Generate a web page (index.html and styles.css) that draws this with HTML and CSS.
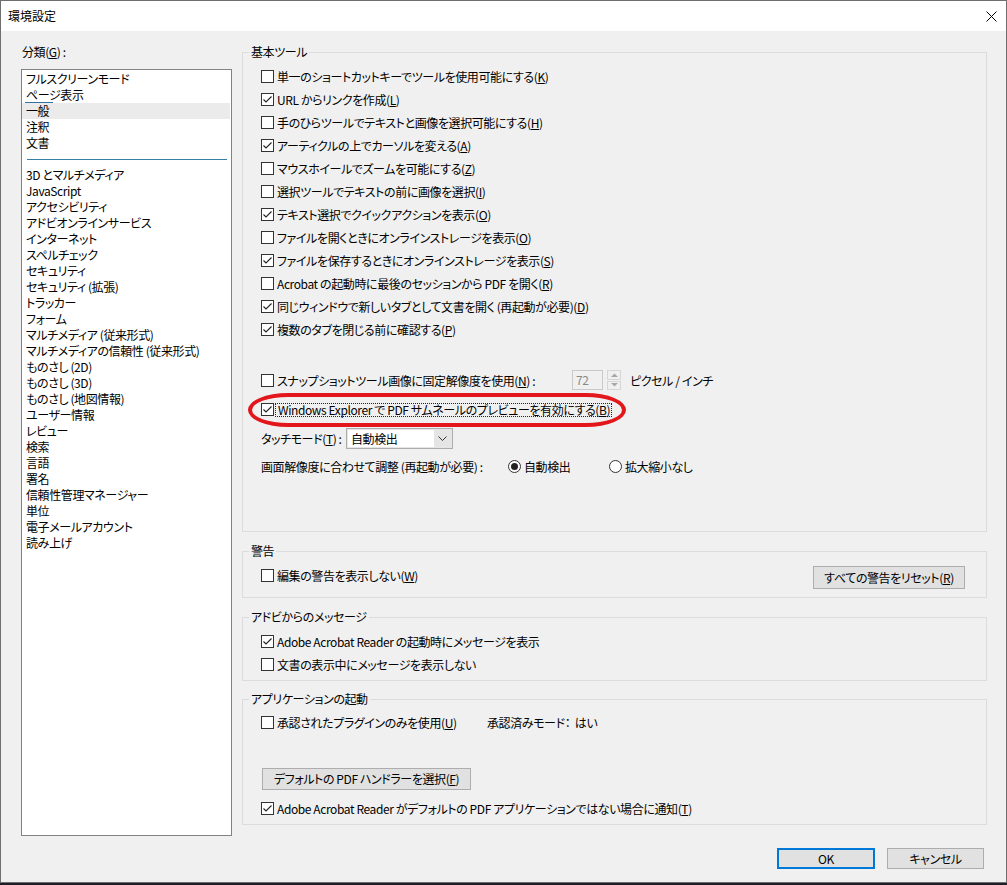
FILE: index.html
```html
<!DOCTYPE html>
<html lang="ja">

<head>
    <meta charset="UTF-8">
    <meta name="viewport" content="width=device-width, initial-scale=1.0">
    <title>環境設定</title>
    <link rel="stylesheet" href="styles.css">
</head>

<body>
    <div class="window">
        <div class="titlebar">
            <span class="title">環境設定</span>
            <svg class="close" width="11" height="11" viewBox="0 0 11 11">
                <path d="M0.5 0.5L10.5 10.5M10.5 0.5L0.5 10.5" stroke="#000" stroke-width="1" fill="none" />
            </svg>
        </div>

        <div class="dialog">
            <!-- left: categories -->
            <div class="side">
                <div class="side-label">分類(<u>G</u>) :</div>
                <ul class="category-list">
                    <li>フルスクリーンモード</li>
                    <li class="hover">ページ表示</li>
                    <li class="selected">一般</li>
                    <li>注釈</li>
                    <li>文書</li>
                    <li class="sep"></li>
                    <li>3D とマルチメディア</li>
                    <li>JavaScript</li>
                    <li>アクセシビリティ</li>
                    <li>アドビオンラインサービス</li>
                    <li>インターネット</li>
                    <li>スペルチェック</li>
                    <li>セキュリティ</li>
                    <li>セキュリティ (拡張)</li>
                    <li>トラッカー</li>
                    <li>フォーム</li>
                    <li>マルチメディア (従来形式)</li>
                    <li>マルチメディアの信頼性 (従来形式)</li>
                    <li>ものさし (2D)</li>
                    <li>ものさし (3D)</li>
                    <li>ものさし (地図情報)</li>
                    <li>ユーザー情報</li>
                    <li>レビュー</li>
                    <li>検索</li>
                    <li>言語</li>
                    <li>署名</li>
                    <li>信頼性管理マネージャー</li>
                    <li>単位</li>
                    <li>電子メールアカウント</li>
                    <li>読み上げ</li>
                </ul>
            </div>

            <!-- right: settings -->
            <div class="main">
                <fieldset class="group group-tools">
                    <legend>基本ツール</legend>
                    <div class="row"><span class="box"></span><span>単一のショートカットキーでツールを使用可能にする(<u>K</u>)</span></div>
                    <div class="row"><span class="box"><svg viewBox="0 0 11 11"><path d="M1.5 5.5L4 8L9.5 2.5" /></svg></span><span>URL からリンクを作成(<u>L</u>)</span></div>
                    <div class="row"><span class="box"></span><span>手のひらツールでテキストと画像を選択可能にする(<u>H</u>)</span></div>
                    <div class="row"><span class="box"><svg viewBox="0 0 11 11"><path d="M1.5 5.5L4 8L9.5 2.5" /></svg></span><span>アーティクルの上でカーソルを変える(<u>A</u>)</span></div>
                    <div class="row"><span class="box"></span><span>マウスホイールでズームを可能にする(<u>Z</u>)</span></div>
                    <div class="row"><span class="box"></span><span>選択ツールでテキストの前に画像を選択(<u>I</u>)</span></div>
                    <div class="row"><span class="box"><svg viewBox="0 0 11 11"><path d="M1.5 5.5L4 8L9.5 2.5" /></svg></span><span>テキスト選択でクイックアクションを表示(<u>O</u>)</span></div>
                    <div class="row"><span class="box"></span><span>ファイルを開くときにオンラインストレージを表示(<u>O</u>)</span></div>
                    <div class="row"><span class="box"><svg viewBox="0 0 11 11"><path d="M1.5 5.5L4 8L9.5 2.5" /></svg></span><span>ファイルを保存するときにオンラインストレージを表示(<u>S</u>)</span></div>
                    <div class="row"><span class="box"></span><span>Acrobat の起動時に最後のセッションから PDF を開く(<u>R</u>)</span></div>
                    <div class="row"><span class="box"><svg viewBox="0 0 11 11"><path d="M1.5 5.5L4 8L9.5 2.5" /></svg></span><span>同じウィンドウで新しいタブとして文書を開く (再起動が必要)(<u>D</u>)</span></div>
                    <div class="row"><span class="box"><svg viewBox="0 0 11 11"><path d="M1.5 5.5L4 8L9.5 2.5" /></svg></span><span>複数のタブを閉じる前に確認する(<u>P</u>)</span></div>

                    <div class="row row-snapshot">
                        <span class="box"></span>
                        <span class="snap-label">スナップショットツール画像に固定解像度を使用(<u>N</u>) :</span>
                        <span class="num-input">72</span>
                        <span class="spinner">
                            <span class="spin"><svg width="7" height="4" viewBox="0 0 7 4"><path d="M0 4L3.5 0.5L7 4Z" /></svg></span>
                            <span class="spin"><svg width="7" height="4" viewBox="0 0 7 4"><path d="M0 0L3.5 3.5L7 0Z" /></svg></span>
                        </span>
                        <span class="unit">ピクセル / インチ</span>
                    </div>

                    <div class="row row-explorer">
                        <span class="box"><svg viewBox="0 0 11 11"><path d="M1.5 5.5L4 8L9.5 2.5" /></svg></span>
                        <span class="focus">Windows Explorer で PDF サムネールのプレビューを有効にする(<u>B</u>)</span>
                        <span class="annotation"></span>
                    </div>

                    <div class="row row-touch">
                        <span class="touch-label">タッチモード(<u>T</u>) :</span>
                        <span class="select">
                            <span class="select-value">自動検出</span>
                            <span class="select-arrow">
                                <svg width="9" height="5" viewBox="0 0 9 5"><path d="M0.5 0.5L4.5 4.5L8.5 0.5" fill="none" stroke="#333" stroke-width="1" /></svg>
                            </span>
                        </span>
                    </div>

                    <div class="row row-scale">
                        <span class="scale-label">画面解像度に合わせて調整 (再起動が必要) :</span>
                        <span class="radio-option first"><span class="radio checked"></span>自動検出</span>
                        <span class="radio-option"><span class="radio"></span>拡大縮小なし</span>
                    </div>
                </fieldset>

                <fieldset class="group group-warn">
                    <legend>警告</legend>
                    <div class="warn-row">
                        <div class="row"><span class="box"></span><span>編集の警告を表示しない(<u>W</u>)</span></div>
                        <button class="btn btn-reset">すべての警告をリセット(<u>R</u>)</button>
                    </div>
                </fieldset>

                <fieldset class="group group-msg">
                    <legend>アドビからのメッセージ</legend>
                    <div class="row"><span class="box"><svg viewBox="0 0 11 11"><path d="M1.5 5.5L4 8L9.5 2.5" /></svg></span><span>Adobe Acrobat Reader の起動時にメッセージを表示</span></div>
                    <div class="row"><span class="box"></span><span>文書の表示中にメッセージを表示しない</span></div>
                </fieldset>

                <fieldset class="group group-app">
                    <legend>アプリケーションの起動</legend>
                    <div class="row">
                        <span class="box"></span>
                        <span class="plugin-label">承認されたプラグインのみを使用(<u>U</u>)</span>
                        <span>承認済みモード：&nbsp; はい</span>
                    </div>
                    <button class="btn btn-handler">デフォルトの PDF ハンドラーを選択(<u>F</u>)</button>
                    <div class="row row-notify"><span class="box"><svg viewBox="0 0 11 11"><path d="M1.5 5.5L4 8L9.5 2.5" /></svg></span><span>Adobe Acrobat Reader がデフォルトの PDF アプリケーションではない場合に通知(<u>T</u>)</span></div>
                </fieldset>

                <div class="footer">
                    <button class="btn btn-ok">OK</button>
                    <button class="btn btn-cancel">キャンセル</button>
                </div>
            </div>
        </div>
    </div>
</body>

</html>
```

FILE: styles.css
```css
* {
    margin: 0;
    padding: 0;
    box-sizing: border-box;
}

body {
    background: #1f1d26;
    font-family: "Noto Sans CJK JP", "Noto Sans", sans-serif;
    font-size: 12px;
    letter-spacing: -0.4px;
    color: #000;
    font-feature-settings: "palt";
}

u {
    text-decoration: underline;
    text-underline-offset: 1px;
}

.window {
    width: 1007px;
    height: 883px;
    background: #f0f0f0;
    border: 1px solid #6e6e6e;
    display: flex;
    flex-direction: column;
}

.titlebar {
    height: 30px;
    background: #fff;
    display: flex;
    align-items: center;
    justify-content: space-between;
    padding: 0 9px 0 7px;
}

.title {
    font-size: 12px;
    line-height: 16px;
    letter-spacing: 0;
}

.close {
    display: block;
}

.dialog {
    flex: 1;
    display: flex;
    gap: 10px;
    padding: 13px 19px 0 20px;
}

/* category list */

.side {
    width: 211px;
}

.side-label {
    line-height: 16px;
    padding-left: 1px;
}

.category-list {
    list-style: none;
    margin-top: 9px;
    height: 767px;
    background: #fff;
    border: 1px solid #828282;
    padding-top: 1px;
}

.category-list li {
    line-height: 16px;
    height: 16px;
    padding-left: 4px;
    white-space: nowrap;
    position: relative;
}

.category-list li.selected {
    background: #ebebeb;
    margin-right: 1px;
}

.category-list li.hover::after {
    content: '';
    position: absolute;
    left: 3px;
    bottom: -1px;
    width: 28px;
    height: 2px;
    background: #2f72a3;
}

.category-list li.sep {
    display: flex;
    align-items: center;
    padding: 0 4px 0 5px;
}

.category-list li.sep::before {
    content: '';
    flex: 1;
    height: 1px;
    background: #3a7fa8;
}

/* groups */

.main {
    width: 745px;
    display: flex;
    flex-direction: column;
}

.group {
    border: 1px solid #dcdcdc;
    padding: 5px 18px 4px;
    min-width: 0;
}

.group legend {
    margin-left: -12px;
    padding: 0 2px;
    line-height: 16px;
}

.group-tools {
    padding-bottom: 53px;
}

.group-warn {
    margin-top: 11px;
    padding: 5px 21px 8px 18px;
}

.group-msg {
    margin-top: 11px;
}

.group-app {
    margin-top: 10px;
    padding-top: 4px;
}

.row {
    display: flex;
    align-items: center;
    height: 23px;
    white-space: nowrap;
}

.box {
    width: 13px;
    height: 13px;
    border: 1px solid #333;
    background: #fff;
    margin-right: 3px;
    flex-shrink: 0;
    display: flex;
}

.box svg {
    width: 11px;
    height: 11px;
}

.box path {
    fill: none;
    stroke: #222;
    stroke-width: 1.1;
}

/* snapshot row */

.row-snapshot {
    margin-top: 27px;
    height: 24px;
}

.snap-label {
    width: 295px;
}

.num-input {
    width: 31px;
    height: 20px;
    border: 1px solid #c9c9c9;
    background: #f0f0f0;
    color: #8a8a8a;
    line-height: 18px;
    padding-left: 3px;
}

.spinner {
    margin-left: 4px;
    width: 14px;
    height: 20px;
    display: flex;
    flex-direction: column;
    gap: 1px;
}

.spin {
    flex: 1;
    border: 1px solid #d6d6d6;
    background: #f0f0f0;
    display: flex;
    align-items: center;
    justify-content: center;
}

.spin path {
    fill: #a8a8a8;
}

.unit {
    margin-left: 9px;
}

/* explorer row with the red mark */

.row-explorer {
    margin-top: 6px;
    position: relative;
}

.focus {
    margin-left: -2px;
    padding: 0 1px 0 2px;
    border: 1px dotted #222;
    line-height: 12px;
    height: 14px;
    flex-shrink: 0;
}

.annotation {
    position: absolute;
    left: -13px;
    top: -5px;
    width: 378px;
    height: 34px;
    border: 4px solid #e3161c;
    border-radius: 40px / 17px;
    pointer-events: none;
}

/* touch mode */

.row-touch {
    margin-top: 6px;
    height: 22px;
}

.touch-label {
    width: 85px;
}

.select {
    width: 107px;
    height: 21px;
    border: 1px solid #adadad;
    background: #e5e5e5;
    padding: 1px;
    display: flex;
}

.select-value {
    width: 86px;
    background: #fff;
    line-height: 17px;
    padding-left: 3px;
}

.select-arrow {
    flex: 1;
    display: flex;
    align-items: center;
    justify-content: center;
}

.select-arrow svg {
    display: block;
}

/* scale radio */

.row-scale {
    margin-top: 6px;
}

.scale-label {
    width: 247px;
}

.radio-option {
    display: flex;
    align-items: center;
}

.radio-option.first {
    width: 101px;
}

.radio {
    width: 13px;
    height: 13px;
    border: 1px solid #333;
    border-radius: 50%;
    background: #fff;
    margin-right: 3px;
    display: flex;
    align-items: center;
    justify-content: center;
}

.radio.checked::before {
    content: '';
    width: 7px;
    height: 7px;
    border-radius: 50%;
    background: #222;
}

/* buttons */

.btn {
    font-family: inherit;
    font-size: 12px;
    letter-spacing: inherit;
    font-feature-settings: "palt";
    color: #000;
    background: #e1e1e1;
    border: 1px solid #adadad;
    height: 23px;
    line-height: 16px;
    cursor: pointer;
}

.warn-row {
    display: flex;
    justify-content: space-between;
    align-items: flex-start;
    height: 25px;
}

.btn-reset {
    width: 152px;
    margin-top: 2px;
}

.plugin-label {
    width: 210px;
}

.btn-handler {
    width: 209px;
    height: 22px;
    margin: 34px 0 0 1px;
    align-self: flex-start;
    display: block;
}

.row-notify {
    margin-top: 7px;
}

.footer {
    display: flex;
    justify-content: flex-end;
    gap: 12px;
    margin-top: 23px;
    padding-right: 3px;
}

.btn-ok {
    width: 98px;
    height: 21px;
    border: 2px solid #0078d7;
}

.btn-cancel {
    width: 97px;
    height: 21px;
}
```
